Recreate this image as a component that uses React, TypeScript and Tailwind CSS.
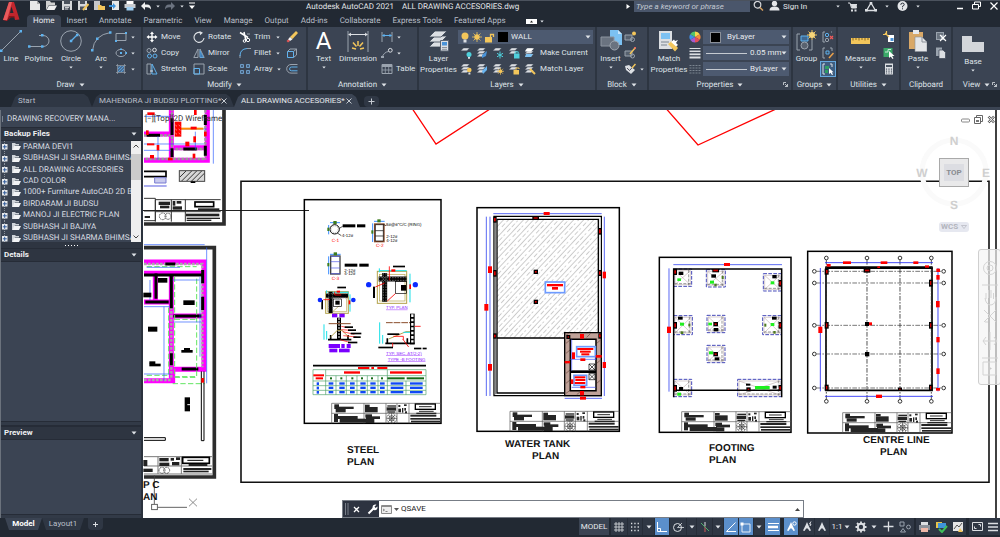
import React from "react";

type Kids = { children?: React.ReactNode };

function Svg({ w, h, children }: Kids & { w: number; h: number }) {
  return (
    <svg width={w} height={h} viewBox={`0 0 ${w} ${h}`} fill="none" className="shrink-0" aria-hidden="true">
      {children}
    </svg>
  );
}

function Caret({ big }: { big?: boolean }) {
  return big ? (
    <Svg w={6} h={4}><path d="M.5 .5h5L3 3.5z" fill="#dfe3e8" /></Svg>
  ) : (
    <Svg w={4} h={3}><path d="M.3 .5h3.4L2 2.5z" fill="#dfe3e8" /></Svg>
  );
}

const W = "#dcdfe3";
const G = "#9aa3ae";
const B = "#5fb2ee";
const Y = "#f3c65b";

/* ---------- small 12x12 icons ---------- */
const icons: Record<string, React.ReactNode> = {
  rect: <><path d="M1 2.5h10v7H1z" stroke={G} /><path d="M0 9h2v2H0zM10 1h2v2h-2z" fill={B} /></>,
  ellipse: <><ellipse cx="6" cy="6" rx="5" ry="3.6" stroke={G} /><path d="M5 5h2v2H5zM10.300 5h1.700v2h-1.700zM5 1.500h2v1.500H5z" fill={B} /></>,
  hatch: <><path d="M2.500 1v10M9.500 1v10M1 2.500h10M1 9.500h10" stroke={G} strokeWidth=".7" /><path d="M3 3h6v6H3z" fill="#4b6d94" /><path d="M3 6l3-3M3 9l6-6M6 9l3-3" stroke={B} strokeWidth=".7" /></>,
  move: <path d="M6 .5L8 3H6.700v2.300H9V4l2.500 2L9 8V6.700H6.700V9H8l-2 2.500L4 9h1.300V6.700H3V8L.5 6 3 4v1.300h2.300V3H4z" fill="#fff" />,
  copy: <><circle cx="3" cy="3.500" r="2" stroke={G} /><circle cx="8.500" cy="3" r="1.800" stroke={W} /><circle cx="3.500" cy="9" r="2" stroke={B} /><circle cx="9" cy="9" r="2" stroke={B} /></>,
  stretch: <><path d="M1 1h4v10H1z" stroke={G} /><path d="M6 1l5 10H6z" stroke={B} /><path d="M4 8h3" stroke={W} /></>,
  rotate: <><path d="M8.500 2A5 5 0 1 0 11 7" stroke={W} strokeWidth="1.100" /><path d="M6.500 0l3.500 1.800-3 2.500z" fill={W} /></>,
  mirror: <><path d="M5 2v8.500H.8zM7 2v8.500h4.200z" stroke={G} /><path d="M7 3.500v7h3.500z" fill="#3f78b0" stroke={B} strokeWidth=".6" /></>,
  scale: <><path d="M1 1h10v10H1z" stroke={G} /><path d="M1 5.500h5.500V11H1z" stroke={B} /></>,
  trim: <><path d="M1 1.500l8 5M5 1l2 9" stroke="#fff" strokeWidth="1.500" /><path d="M8 3h3" stroke={G} /><circle cx="9" cy="9" r="1.700" stroke="#fff" /><circle cx="5.500" cy="10" r="1.300" stroke="#fff" /></>,
  fillet: <><path d="M1 11V8" stroke={G} /><path d="M1 9Q1 2 8 1.500" stroke={B} /><path d="M8 1.500h4" stroke={G} /></>,
  array: <path d="M1.500 1.500h3v3h-3zM7.500 1.500h3v3h-3zM1.500 7.500h3v3h-3zM7.500 7.500h3v3h-3z" fill="#44607e" stroke="#6d9bc5" />,
  erase: <><path d="M10 0l2 2-5.500 6L4 6z" fill={Y} /><path d="M4 6l2.500 2.200L4 10 2 8.500z" fill="#f5f5f5" /><path d="M2 8.500L4 10l-2 1.500L.5 10z" fill="#e05555" /></>,
  explode: <><path d="M1.500 4.500h6v6h-6z" stroke={B} /><path d="M1.500 4.500L4 2h6.500l-3 2.500M10.500 2v6l-3 2.500" stroke={G} /></>,
  offset: <><path d="M11.500 1.500H5a4.300 4.300 0 0 0 0 8.600h6.500" stroke={G} /><path d="M11.500 4H5.500a1.900 1.900 0 0 0 0 3.800h6" stroke={B} /></>,
  dim: <><path d="M1 1v10M11 1v10" stroke={G} /><path d="M1.500 4.500h9M3.500 3L2 4.500 3.500 6M8.500 3L10 4.500 8.500 6" stroke={B} /></>,
  leader: <><path d="M1 10.500Q3 5 7.500 4.500" stroke={G} /><circle cx="9.300" cy="3.300" r="1.900" stroke={W} /><path d="M0 9h3v2H0z" fill={G} /></>,
  table: <><path d="M1 1.500h10v9H1z" stroke={G} /><path d="M1 2h10v2H1z" fill={G} /><path d="M4.300 4v6.500M7.700 4v6.500M1 7h10" stroke={G} strokeWidth=".8" /></>,
  insert1: <><path d="M1 4h7v5H1z" stroke={G} fill="#56606e" /><circle cx="8.500" cy="8.500" r="2" stroke={G} /><circle cx="10" cy="2.500" r="2" fill={Y} /></>,
  insert2: <><path d="M1 4h7v5H1z" stroke={G} fill="#56606e" /><circle cx="8.500" cy="9" r="2" stroke={G} /><path d="M11.500 .5L6 7" stroke={Y} strokeWidth="1.500" /><path d="M11.700 .3L10.500 1.700" stroke="#e66" strokeWidth="1.800" /></>,
  tag: <><path d="M1 3l4-1 6 5-4 4-5-4z" fill={W} /><path d="M3 5l2.500 2.500L11 1.500" stroke="#445" strokeWidth=".9" /><path d="M11.500 1L8 5" stroke={Y} strokeWidth="1.500" /></>,
  wheel: <><path d="M6 6V.500A5.500 5.500 0 0 1 10.800 3.200z" fill="#f6d94c" /><path d="M6 6l4.800-2.800a5.500 5.500 0 0 1 0 5.500z" fill="#f58a3c" /><path d="M6 6l4.800 2.700A5.500 5.500 0 0 1 6 11.500z" fill="#e34d5c" /><path d="M6 6v5.500a5.500 5.500 0 0 1-4.800-2.800z" fill="#a45cd0" /><path d="M6 6L1.200 8.700a5.500 5.500 0 0 1 0-5.500z" fill="#3f8fe8" /><path d="M6 6L1.200 3.200A5.500 5.500 0 0 1 6 .5z" fill="#52c46a" /></>,
  weights: <><path d="M.5 1.500h11" stroke={W} /><path d="M.5 4.300h11" stroke={W} strokeWidth="1.500" /><path d="M.5 7.300h11" stroke={W} strokeWidth="1.800" /><path d="M.5 10.500h11" stroke={W} strokeWidth="2" /></>,
  types: <path d="M.5 2.500h11M.5 5h11M.5 7.500h11M.5 10h11" stroke="#7b8490" strokeDasharray="2 1" />,
  ungroup: <><path d="M3 1H1v10h2M9 1h1" stroke={G} /><circle cx="5" cy="4" r="1.700" stroke={B} /><circle cx="5" cy="9" r="1.700" stroke={G} /><path d="M8 5l3 3M11 5L8 8" stroke="#ef5a5a" strokeWidth="1.200" /></>,
  groupEdit: <><path d="M3 1H1v10h2M8 1h2v3" stroke={G} /><path d="M4 4h3v3H4z" stroke={B} /><path d="M11.500 6L7 11" stroke="#eda24a" strokeWidth="1.500" /></>,
  groupSel: <><path d="M3 1H1v10h2M8 1h2v3" stroke={W} /><path d="M3 3h4v3H3zM3 7h3v3H3z" fill="#2f9d63" /><path d="M7 5v6l1.500-1.200L10 12l1-.6-1.200-2.200H11.500z" fill="#fff" /></>,
  quick: <><path d="M5 4h6v7H5z" fill="#fff" /><path d="M7.500 7h3v3h-3z" fill="#4a93d8" /><path d="M2 2l4 4M3.500 0v3M0 3.500h3" stroke={Y} strokeWidth="1.200" /></>,
  select: <><path d="M.5 1h9v9h-9z" fill="#3ba968" /><path d="M2 5h3V2.500h3" stroke="#cbead7" /><path d="M6 4v7l1.700-1.500L9.500 12l1-.7L9 9h2.500z" fill="#fff" /></>,
  calc: <><path d="M2 .5h8v11H2z" fill={W} /><path d="M3 2h6v2H3z" fill="#4b5563" /><path d="M3.500 5.500v5M6 5.500v5M8.500 5.500v5" stroke="#4b5563" strokeDasharray="1.200 .8" strokeWidth="1.200" /></>,
  cut: <><path d="M1 1h8v8H1z" fill={G} /><path d="M2 3h6M2 5h4M2 7h4" stroke="#3b4453" /><path d="M5 4l6 6M11 4l-6 6" stroke="#fff" strokeWidth="1.100" /></>,
  clip: <><path d="M1 .5h6V9H1z" fill={G} /><path d="M4 3h4l2.500 2.500v6H4z" fill={W} stroke="#3b4453" strokeWidth=".7" /></>,
};

function Icon({ n }: { n: string }) {
  return <Svg w={12} h={12}>{icons[n]}</Svg>;
}

function Sheets({ badge, n = 3 }: { badge?: React.ReactNode; n?: number }) {
  return (
    <Svg w={12} h={12}>
      {Array.from({ length: n }, (_, i) => (
        <path key={i} d={`M3.500 ${1 + i * 3}h6l-2.500 2.800H.8z`} fill={W} stroke="#3b4453" strokeWidth=".4" />
      ))}
      {badge}
    </Svg>
  );
}

const cy = "#4fd0dc";
const layerRow1 = [
  <Sheets n={1} badge={<><circle cx="9" cy="7.500" r="2.500" fill={cy} /><path d="M8 10h2v1.800H8z" fill={W} /></>} />,
  <Sheets badge={<path d="M6 8l5-4-1 5-4 2z" fill="#4a93d8" />} />,
  <Sheets n={1} badge={<path d="M8 4.500v7M5 6.300l6 3.500M11 6.300L5 9.800" stroke={cy} />} />,
  <Sheets n={2} badge={<><path d="M6 6.500h5.500v5H6z" fill={cy} /><path d="M7.200 6.500V4.800h3v1.700" stroke={cy} /></>} />,
  <Sheets badge={<><path d="M3 1.500h7l-3 3H1z" fill="#fff" /><path d="M2 7h7l-2 3H1z" fill="#7cc1f2" /></>} />,
];
const layerRow2 = [
  <Sheets badge={<><circle cx="9.300" cy="7" r="2.300" fill={Y} /><path d="M8.400 9.500h2v2h-2z" fill={W} /></>} />,
  <Sheets badge={<path d="M6 8l5-5v4l-4 4z" fill="#68b4f0" />} />,
  <Sheets badge={<><circle cx="8.500" cy="8.300" r="1.800" fill={Y} /><path d="M8.500 4.800v7M5 8.300h7M6 5.800l5 5M11 5.800l-5 5" stroke={Y} strokeWidth=".7" /></>} />,
  <Sheets n={2} badge={<><path d="M5.500 7h5.500v4.500H5.500z" fill={Y} /><path d="M8 7V5h3v1" stroke={Y} /></>} />,
  <Sheets badge={<path d="M6 6l5 5" stroke={Y} strokeWidth="2" />} />,
];

/* ---------- ribbon parts ---------- */
function Panel({ title, children, caret = true, corner }: Kids & { title: string; caret?: boolean; corner?: boolean }) {
  return (
    <section aria-label={title} className="flex min-w-0 flex-col border-r-2 border-[#2d3541] bg-[#3b4453] last:border-r-0">
      <div className="flex h-[52px] pt-[2px]">{children}</div>
      <div className="relative flex h-[11px] items-center justify-center gap-1">
        <span>{title}</span>
        {caret && <Caret big />}
        {corner && (
          <span className="absolute right-[3px]"><Svg w={5} h={5}><path d="M.5 3V.5H3M2 2l2.500 2.500M4.500 2v2.500H2" stroke={W} strokeWidth=".8" /></Svg></span>
        )}
      </div>
    </section>
  );
}

function Big({ icon, lines, caret, width }: { icon: React.ReactNode; lines: string[]; caret?: boolean; width: string }) {
  return (
    <button className={`flex shrink-0 flex-col items-center ${width}`}>
      <span className="flex h-[24px] items-center justify-center">{icon}</span>
      {lines.map((l) => <span key={l} className="h-[11px] leading-[11px]">{l}</span>)}
      {caret && <span className="flex h-[6px] items-center"><Caret /></span>}
    </button>
  );
}

function Row({ n, label, caret }: { n: string; label?: string; caret?: boolean }) {
  return (
    <button aria-label={label ?? n} className="flex h-4 items-center">
      <Icon n={n} />
      {label && <span className="pl-[3px]">{label}</span>}
      {caret && <span className="ml-auto pl-1 pr-[6px]"><Caret /></span>}
    </button>
  );
}

function Combo({ label, value, children, line }: Kids & { label: string; value: string; line?: boolean }) {
  return (
    <div className="relative flex h-[14px] min-w-0 items-center gap-[3px] bg-[#4d5a70] pl-[3px]">
      {children}
      {line && <span className="h-px w-[41px] shrink-0 bg-[#c5cad1]" />}
      <select aria-label={label} defaultValue={value} className="min-w-0 flex-1 appearance-none bg-transparent text-[8px] leading-[12px] text-[#e6e9ed] outline-none">
        <option>{value}</option>
      </select>
      <span className="pointer-events-none absolute right-[2px]"><Caret big /></span>
    </div>
  );
}

function Ribbon() {
  return (
    <div className="grid grid-cols-[143fr_165fr_111fr_178fr_52fr_144fr_45fr_63fr_52fr_47fr]">
      <Panel title="Draw">
        <Big width="w-[22px]" lines={["Line"]} icon={<Svg w={22} h={22}><path d="M1.500 20.500l19-19" stroke={G} /><path d="M0 19.500h2.500V22H0zM19.500 0H22v2.500h-2.500z" fill={B} /></Svg>} />
        <Big width="w-[33px]" lines={["Polyline"]} icon={<Svg w={22} h={16}><path d="M1 13.500h14a6 5.500 0 0 0 0-11h-4" stroke={G} /><path d="M0 12.300h2.500v2.500H0zM13 12.300h2.500v2.500H13zM13 1h2.500v2.500H13z" fill={B} /></Svg>} />
        <Big width="w-[32px]" caret lines={["Circle"]} icon={<Svg w={22} h={22}><circle cx="11" cy="11" r="10.300" stroke={G} /><path d="M11 11l6-6" stroke={B} strokeWidth="1.200" /><path d="M9.800 9.800h2.500v2.500H9.800zM16 3.800h2.500v2.500H16z" fill={B} /></Svg>} />
        <Big width="w-[28px]" caret lines={["Arc"]} icon={<Svg w={21} h={21}><path d="M1.500 19.500Q3 4 19.500 1.500" stroke={G} /><path d="M0 18h2.500v2.500H0zM18 .3h2.500v2.500H18zM5 6.500h2.500V9H5z" fill={B} /></Svg>} />
        <div className="flex w-[26px] flex-col"><Row n="rect" caret /><Row n="ellipse" caret /><Row n="hatch" caret /></div>
      </Panel>
      <Panel title="Modify">
        <div className="grid w-full grid-cols-[47px_46px_47px_14px] content-start pl-[3px]">
          <Row n="move" label="Move" /><Row n="rotate" label="Rotate" /><Row n="trim" label="Trim" caret /><Row n="erase" />
          <Row n="copy" label="Copy" /><Row n="mirror" label="Mirror" /><Row n="fillet" label="Fillet" caret /><Row n="explode" />
          <Row n="stretch" label="Stretch" /><Row n="scale" label="Scale" /><Row n="array" label="Array" caret /><Row n="offset" />
        </div>
      </Panel>
      <Panel title="Annotation">
        <Big width="w-[31px]" caret lines={["Text"]} icon={<span className="text-[24px] leading-[24px] text-white">A</span>} />
        <Big width="w-[38px]" lines={["Dimension"]} icon={<Svg w={22} h={21}><path d="M1 0v21M21 0v21" stroke={G} /><path d="M1.500 3.500h19M4 2L2 3.500 4 5M18 2l2 1.500L18 5" stroke={W} /><path d="M5 17l4 1M6 11.500l3.500 4M11 10v5M16 11.500l-3.500 4M17 17l-4 1" stroke={Y} strokeWidth="1.500" /></Svg>} />
        <div className="flex w-[38px] flex-col pl-[4px]">
          <div className="flex w-[24px] flex-col"><Row n="dim" caret /><Row n="leader" caret /></div>
          <Row n="table" label="Table" />
        </div>
      </Panel>
      <Panel title="Layers">
        <Big width="w-[39px]" lines={["Layer", "Properties"]} icon={<Svg w={22} h={22}>{[10, 5, 0].map((y) => <path key={y} d={`M7 ${1 + y}h12l-6 6H1z`} fill={W} stroke="#3b4453" strokeWidth=".8" />)}<path d="M12.500 10.500h8V21h-8z" fill={W} stroke="#5b6573" /><path d="M14 12h5v3.500h-5z" fill="#4a93d8" /><path d="M14 17.500h5M14 19.300h5" stroke="#8a929c" /></Svg>} />
        <div className="flex min-w-0 flex-1 flex-col pr-[2px]">
          <div className="h-4 pt-px">
            <Combo label="Layer" value="WALL">
              <Svg w={8} h={11}><circle cx="4" cy="4" r="3.500" fill={Y} /><path d="M2.500 7.500h3v3h-3z" fill={W} /></Svg>
              <Svg w={10} h={10}><circle cx="5" cy="5" r="2.700" fill={Y} /><path d="M5 0v10M0 5h10M1.500 1.500l7 7M8.500 1.500l-7 7" stroke={Y} strokeWidth=".8" /></Svg>
              <Svg w={10} h={11}><path d="M0 5h7v5.500H0z" fill={Y} /><path d="M5.500 5V2.500h3V5" stroke={Y} strokeWidth="1.300" /></Svg>
              <span className="h-[10px] w-[10px] shrink-0 bg-black" />
            </Combo>
          </div>
          <div className="flex h-4 items-center gap-1 pl-[2px]">{layerRow1.map((s, i) => <span key={i}>{s}</span>)}<button className="whitespace-nowrap">Make Current</button></div>
          <div className="flex h-4 items-center gap-1 pl-[2px]">{layerRow2.map((s, i) => <span key={i}>{s}</span>)}<button className="whitespace-nowrap">Match Layer</button></div>
        </div>
      </Panel>
      <Panel title="Block">
        <Big width="w-[27px]" caret lines={["Insert"]} icon={<Svg w={22} h={22}><path d="M10 0h8l4 4v11H10z" fill="#7cc1f2" /><path d="M18 0v4h4" fill="#c9e6fb" /><path d="M1 7h13v9H1z" fill="#6a7380" stroke="#8d95a0" /><circle cx="14.500" cy="15.500" r="4.500" fill="#6a7380" stroke="#a0a7b0" /></Svg>} />
        <div className="flex w-[23px] flex-col"><Row n="insert1" /><Row n="insert2" /><Row n="tag" caret /></div>
      </Panel>
      <Panel title="Properties" corner>
        <Big width="w-[40px]" lines={["Match", "Properties"]} icon={<Svg w={22} h={22}><path d="M1 1h13v18H1z" fill={W} /><path d="M3 3h9v6H3z" fill="#7cc1f2" /><path d="M3 12h8M3 15h6" stroke="#7b848f" /><path d="M10 14l4-3 6 7-3 3.500z" fill={Y} /><path d="M13 12l3-2.500 1 1.500 3-1-2 3 2 2-2 1.500z" fill="#fff" /></Svg>} />
        <div className="flex w-[14px] flex-col"><Row n="wheel" /><Row n="weights" /><Row n="types" /></div>
        <div className="flex min-w-0 flex-1 flex-col gap-[2px] pr-[2px] pt-px">
          <Combo label="Object color" value="ByLayer"><span className="ml-1 mr-[3px] h-[11px] w-[11px] shrink-0 border border-[#8a8f98] bg-black" /></Combo>
          <Combo label="Lineweight" value="0.05 mm" line />
          <Combo label="Linetype" value="ByLayer" line />
        </div>
      </Panel>
      <Panel title="Groups">
        <Big width="w-[27px]" lines={["Group"]} icon={<Svg w={22} h={22}><path d="M4 4H1v16h3M13 20h3V10" stroke={G} /><path d="M5 6h7v5H5z" fill="#3f6892" stroke={B} /><circle cx="8.500" cy="15.500" r="3.500" fill="#59626f" stroke={G} /><path d="M16 0v10M11 5h10M12.500 1.500l7 7M19.500 1.500l-7 7" stroke={Y} /><circle cx="16" cy="5" r="3" fill="#f8d679" /></Svg>} />
        <div className="flex w-[16px] flex-col items-center"><Row n="ungroup" /><Row n="groupEdit" /><span className="flex h-4 w-4 items-center justify-center border border-[#66a9df] bg-[#3f5e80]"><Row n="groupSel" /></span></div>
      </Panel>
      <Panel title="Utilities">
        <Big width="w-[45px]" caret lines={["Measure"]} icon={<Svg w={19} h={6}><path d="M0 0h19v6H0z" fill={Y} /><path d="M2 0v2.500M5 0v2M8 0v2.500M11 0v2M14 0v2.500M17 0v2" stroke="#8b6a20" /></Svg>} />
        <div className="flex flex-col"><Row n="quick" /><Row n="select" /><Row n="calc" /></div>
      </Panel>
      <Panel title="Clipboard" caret={false}>
        <Big width="w-[34px]" caret lines={["Paste"]} icon={<Svg w={18} h={22}><path d="M0 2h14v17H0z" fill="#d9a867" /><path d="M4 0h6v4H4z" fill="#e8eaed" /><path d="M6 7h7l5 5v9.500H6z" fill="#e4e6e9" stroke="#8a9099" strokeWidth=".6" /><path d="M13 7v5h5" stroke="#8a9099" /></Svg>} />
        <div className="flex flex-col"><Row n="cut" /><Row n="clip" /></div>
      </Panel>
      <Panel title="View" corner>
        <div className="w-full pt-[3px]">
          <Big width="w-[40px]" caret lines={["Base"]} icon={<Svg w={22} h={16}><path d="M0 0h10v6h12v10H0z" fill="#d3d6da" /></Svg>} />
        </div>
      </Panel>
    </div>
  );
}

/* ---------- title bar ---------- */
function TitleBar() {
  return (
    <div className="flex h-[14px] items-start whitespace-nowrap">
      <div className="flex w-[279px] shrink-0 items-center gap-[4px] pl-[2px]">
        <Svg w={12} h={10}><path d="M1 0h7l3 3v6H1z" fill="#e8e8e8" /><path d="M8 0v3h3" fill="#aaa" /></Svg>
        <Svg w={12} h={10}><path d="M1 0h4l1 1.500h4V4H4L1 9z" fill="#d0d0d0" /><path d="M4 4.500h8L9.500 9H1.500z" fill="#f0f0f0" /></Svg>
        <Svg w={12} h={10}><path d="M1 0h10v9H1z" fill="#d5d7da" /><path d="M3 0h6v3H3zM3 5.500h6V9H3z" fill="#4a515c" /><path d="M4 6.500h4M4 8h3" stroke="#fff" strokeWidth=".7" /></Svg>
        <Svg w={12} h={10}><path d="M1 0h9v9H1z" fill="#d5d7da" /><path d="M3 0h5v3H3zM3 5.500h5V9H3z" fill="#4a515c" /><path d="M11.500 3L6 9" stroke={Y} strokeWidth="2" /></Svg>
        <Svg w={12} h={10}><path d="M1 0h6v9H1z" fill="#c8c8c8" /><path d="M5 4h3l1 1h3v4H5z" fill={Y} /></Svg>
        <Svg w={11} h={10}><path d="M3 0h7v9H3z" fill="#e8e8e8" /><path d="M0 4h4V2l3 3-3 3V6H0z" fill="#3f93db" /></Svg>
        <Svg w={12} h={10}><path d="M2.500 0h7v3h-7z" fill="#fff" /><path d="M.5 3h11v4H.5z" fill="#c9ccd1" /><path d="M2.500 6h7v3.500h-7z" fill="#9fd0f5" /></Svg>
        <Svg w={12} h={10}><path d="M1 5l4-4v2.500h2Q11 3.500 11 8.500 9.500 6.200 7 6.200H5V9z" fill="#f0f0f0" /></Svg>
        <Caret />
        <Svg w={12} h={10}><path d="M11 5L7 1v2.500H5Q1 3.500 1 8.500 2.500 6.200 5 6.200h2V9z" fill="#6b7380" /></Svg>
        <Caret />
        <Svg w={8} h={8}><path d="M1 1h6" stroke="#fff" /><path d="M1 3.500h6L4 7z" fill="#fff" /></Svg>
      </div>
      <h1 className="flex w-[320px] shrink-0 gap-2 leading-[11px] text-[#e2e5e9]"><span>Autodesk AutoCAD 2021</span><span>ALL DRAWING ACCESORIES.dwg</span></h1>
      <span className="w-[8px] pt-[3px]"><Svg w={4} h={5}><path d="M.5 0L4 2.500.5 5z" fill="#fff" /></Svg></span>
      <input aria-label="Search" placeholder="Type a keyword or phrase" className="h-[11px] w-[116px] bg-[#4a566b] pl-[2px] text-[8px] italic leading-[11px] text-white outline-none placeholder:text-[#c3c9d2]" />
      <span className="flex w-[33px] gap-[5px] pl-[3px]">
        <Svg w={11} h={10}><circle cx="4.500" cy="3.800" r="3.300" stroke="#d5d7da" strokeWidth="1.200" /><path d="M7 6.500l3 3" stroke="#d5a060" strokeWidth="1.500" /></Svg>
        <Svg w={11} h={10}><circle cx="5.500" cy="2.500" r="2.700" fill="#e4e6e9" /><path d="M.5 9.500q0-4 5-4t5 4z" fill="#e4e6e9" /></Svg>
      </span>
      <button className="w-[53px] text-left leading-[11px] text-[#e2e5e9]">Sign In</button>
      <div className="flex items-center gap-[8px]">
        <Caret />
        <Svg w={9} h={10}><path d="M0 1h2l1.500 5h5L9 2.500H2.500" stroke={W} /><path d="M3 3h5.500L8 6H3.500zM3 7.500h2v2H3zM6.500 7.500h2v2h-2z" fill={W} /></Svg>
        <Svg w={12} h={10}><path d="M6 1l4.500 7.500h-9z" stroke={W} strokeWidth="1.300" /><path d="M4.700 0h2.600v2.500H4.700zM0 7h2.600v2.500H0zM9.400 7H12v2.500H9.400z" fill={W} /></Svg>
        <Caret />
        <Svg w={11} h={11}><circle cx="5.500" cy="5" r="5" fill="#e4e6e9" /><path d="M3.800 3.800q0-1.700 1.700-1.700t1.700 1.500q0 1-1.700 1.700v1M5.500 7.300v1" stroke="#222933" /></Svg>
        <Caret />
      </div>
      <div className="ml-auto flex gap-[9px] pr-[2px]">
        <Svg w={6} h={10}><path d="M0 7.500h6" stroke="#fff" strokeWidth="1.500" /></Svg>
        <Svg w={9} h={10}><path d="M2.500 3V1h6v4.500h-2M.5 3.500h6V8h-6z" stroke="#fff" /></Svg>
        <Svg w={8} h={10}><path d="M.5 1.500l7 7M7.500 1.500l-7 7" stroke="#fff" strokeWidth="1.200" /></Svg>
      </div>
    </div>
  );
}

const menu = ["Insert", "Annotate", "Parametric", "View", "Manage", "Output", "Add-ins", "Collaborate", "Express Tools", "Featured Apps"];

function Header() {
  return (
    <header className="flex">
      <button aria-label="Application menu" className="flex w-[27px] shrink-0 items-start pl-[3px]">
        <Svg w={17} h={22}><path d="M6 1h5l5.500 17.500-4.500.5-1-4H6.500L4 20l-4-1z" fill="#c2262d" /><path d="M6 1h3L4 19l-4 0z" fill="#e85a5c" /><path d="M8.500 5.500l2 6.500H7z" fill="#222933" /><path d="M4 20l2.500-5H11l1 1.500H8z" fill="#8d1419" /></Svg>
      </button>
      <div className="min-w-0 flex-1">
        <TitleBar />
        <nav className="flex h-[12px] items-stretch text-[#b9bfc8]">
          <a href="#home" className="flex items-center rounded-t-sm bg-[#3b4453] px-[6px] text-[#e6e9ed]">Home</a>
          {menu.map((m) => <a key={m} href={`#${m}`} className="flex items-center whitespace-nowrap px-[6px]">{m}</a>)}
          <span className="flex items-center gap-[3px] pl-[14px]"><Svg w={11} h={5}><path d="M0 0h11v5H0z" fill="#fff" /><path d="M4 3.500h3L5.500 1.500z" fill="#222" /></Svg><Caret /></span>
        </nav>
      </div>
    </header>
  );
}

function FileTabs() {
  const tab = "flex h-[13px] items-center justify-between pl-[7px] pr-[8px] whitespace-nowrap [clip-path:polygon(0_100%,4px_3px,8px_0,calc(100%-8px)_0,calc(100%-4px)_3px,100%_100%)]";
  const x = <Svg w={6} h={6}><path d="M.5 .5l5 5M5.500 .5l-5 5" stroke="#c5cad1" /></Svg>;
  return (
    <div className="flex h-[20px] items-end border-b-[3px] border-[#3b4453] pl-[11px]">
      <button className={`${tab} w-[81px] bg-[#2f3744] text-[#b9bfc8]`}>Start</button>
      <button className={`${tab} w-[142px] bg-[#2f3744] text-[#b9bfc8]`}>MAHENDRA JI BUDSU PLOTTING*{x}</button>
      <button className={`${tab} w-[126px] bg-[#3b4453] text-[#e6e9ed]`}>ALL DRAWING ACCESORIES*{x}</button>
      <button aria-label="New drawing" className="ml-1 flex h-[11px] w-[15px] items-center justify-center rounded bg-[#2f3744]"><Svg w={7} h={7}><path d="M3.500 .5v6M.5 3.500h6" stroke="#c5cad1" /></Svg></button>
    </div>
  );
}

/* ---------- drawing recovery palette ---------- */
const backups = ["PARMA DEVI1", "SUBHASH JI SHARMA BHIMSA", "ALL DRAWING ACCESORIES", "CAD COLOR", "1000+ Furniture AutoCAD 2D B", "BIRDARAM JI BUDSU", "MANOJ JI ELECTRIC PLAN", "SUBHASH JI BAJIYA", "SUBHASH JI SHARMA BHIMSA"];

function PaletteHead({ children }: Kids) {
  return (
    <button className="flex h-[14px] w-full shrink-0 items-center justify-between border-y border-[#262c37] bg-[#2e3541] pl-[3px] pr-1 font-bold text-[#eef0f3]">
      {children}<Caret big />
    </button>
  );
}

function Palette() {
  return (
    <aside className="flex w-[143px] shrink-0 flex-col border-l border-r-2 border-l-[#6b727c] border-r-[#2b323d] bg-[#3b4453] text-[#d7dbe0]">
      <h2 className="flex h-[17px] shrink-0 items-center gap-[4px] pl-px"><span className="h-[6px] w-px bg-[#7b8490]" />DRAWING RECOVERY MANA...</h2>
      <PaletteHead>Backup Files</PaletteHead>
      <div className="flex h-[101px] shrink-0 overflow-hidden">
        <ul className="grid h-[103px] min-w-0 flex-1 grid-rows-9 overflow-hidden">
          {backups.map((b, i) => (
            <li key={i} className="flex items-center whitespace-nowrap">
              <Svg w={20} h={11}><path d="M3.500 0v11" stroke="#8b929c" strokeDasharray="1 1" /><path d="M1 3h5.500v5.500H1z" fill="#e9ebee" /><path d="M3.700 3.800v4M1.800 5.800h4" stroke="#2f5a9a" /><path d="M11 2h3l1 1h3v1.500h-4L12 9h-1z" fill="#cfd3d8" /><path d="M13 5h7l-2 4h-6.500z" fill="#f2f3f5" /></Svg>
              <span className="pl-[2px]">{b}</span>
            </li>
          ))}
        </ul>
        <div className="flex w-[10px] shrink-0 flex-col items-center justify-between bg-[#efefef] py-[3px]">
          <Svg w={6} h={4}><path d="M.5 3.500L3 1l2.500 2.500" stroke="#444" /></Svg>
          <span className="mb-auto mt-[6px] h-[26px] w-[10px] bg-[#cbcbcb]" />
          <Svg w={6} h={4}><path d="M.5 .5L3 3 5.500 .5" stroke="#444" /></Svg>
        </div>
      </div>
      <div className="flex h-[6px] shrink-0 items-center justify-center gap-[2px] bg-[#2e3541]">{[0, 1, 2, 3, 4].map((i) => <span key={i} className="h-px w-px bg-white" />)}</div>
      <PaletteHead>Details</PaletteHead>
      <div className="flex-[159_1_0px]" />
      <div className="h-[5px] border-y border-[#262c37] bg-[#323a47]" />
      <PaletteHead>Preview</PaletteHead>
      <div className="flex-[74_1_0px]" />
      <div className="h-[4px] border-t border-[#262c37] bg-[#323a47]" />
    </aside>
  );
}

/* ---------- drawing sheets ---------- */
const K = "#000";
const R = "#f00";
const L = "#3a4cf0";

/* Filled boxes given as [x, y, w, h] */
function Boxes({ at, fill }: { at: number[][]; fill: string }) {
  return <>{at.map(([x, y, w, h], i) => <rect key={i} x={x} y={y} width={w} height={h} fill={fill} />)}</>;
}

function TitleBlock({ x, y }: { x: number; y: number }) {
  return (
    <g transform={`translate(${x} ${y})`}>
      <path d="M0 60V0H328M0 30H328M97 0V60M163 0V60M196 0V60M232 0V60" stroke="#555" strokeWidth="2" />
      <Boxes fill="#252525" at={[[8, 3, 14, 8], [8, 10, 58, 7], [12, 17, 30, 10], [7, 32, 12, 24], [18, 38, 60, 9], [24, 46, 82, 12], [100, 4, 14, 7], [100, 11, 38, 16], [101, 33, 20, 10], [103, 39, 42, 8], [102, 47, 26, 12], [167, 6, 26, 4], [165, 12, 28, 10], [167, 24, 24, 4], [200, 5, 6, 6], [217, 3, 8, 5], [200, 16, 8, 11], [211, 14, 4, 14], [218, 14, 5, 8], [220, 24, 6, 6], [254, 28, 60, 4], [236, 34, 78, 6], [236, 44, 90, 5], [238, 52, 88, 5]]} />
      <rect x="251" y="2" width="60" height="16" stroke={K} strokeWidth="4" />
      <path d="M262 10h38M262 24h44" stroke={K} strokeWidth="2.500" />
      <g stroke="#333" strokeWidth="2" fill="none"><circle cx="180" cy="45" r="15" strokeDasharray="4 2" /><circle cx="180" cy="45" r="8" /><path d="M180 31v28M166 45h28M170 35l20 20M190 35l-20 20" /></g>
    </g>
  );
}

function SteelSheet() {
  return (
    <g transform="translate(300 195) scale(.33333)" strokeWidth="2">
      <rect x="13" y="14" width="410" height="671" stroke={K} strokeWidth="4.500" />
      <circle cx="104" cy="103" r="14" stroke={K} strokeWidth="3" />
      <circle cx="104" cy="103" r="10" stroke="#999" strokeDasharray="3 3" />
      <rect x="224" y="87" width="28" height="53" stroke="#8a4b2a" strokeWidth="4" />
      <path d="M226 89h24v49h-24zM226 107h24M226 123h24" stroke={K} />
      <rect x="92" y="183" width="28" height="54" stroke="#444" strokeWidth="4" />
      <path d="M92 200h28M92 219h28M92 184h28M92 236h28" stroke="#4b55e8" />
      <path d="M90 83h30M86 90v28M222 79h32M218 85v56M90 178h32M86 184v54" stroke="#3a8cff" strokeWidth="3" />
      <Boxes fill="#3d7d1d" at={[[100, 78, 10, 9], [232, 73, 10, 9], [101, 172, 10, 9], [82, 98, 6, 10], [214, 106, 6, 10], [82, 204, 6, 10]]} />
      <Boxes fill={K} at={[[128, 88, 38, 9], [171, 88, 25, 9], [134, 206, 38, 9], [178, 206, 28, 9], [112, 275, 26, 5], [279, 212, 36, 5], [64, 315, 5, 28], [219, 275, 6, 34]]} />
      <path d="M118 100l10-6M112 114l12 8M250 88l8 4" stroke={K} />
      <g fontFamily="Liberation Sans" fontSize="13" fill={K}>
        <text x="126" y="127">4-12#</text><text x="258" y="92">8#@6"C/C (RING)</text><text x="259" y="130">2-12#</text><text x="259" y="141">4-12#</text><text x="133" y="230">2-12#</text><text x="133" y="241">4-12#</text>
      </g>
      <g fontFamily="Liberation Sans" fontSize="14" fill={R}><text x="95" y="142">C-1</text><text x="228" y="156">C-2</text><text x="95" y="255">C-3</text></g>
      {/* footing plans */}
      <g>
        <rect x="77" y="290" width="68" height="65" stroke="#b3a24a" strokeWidth="3" />
        <path d="M82 296h58v54H82zM98 350l20-18" stroke="#b3a24a" />
        <path d="M84 292h60M150 298v52M144 290v14M80 286v10" stroke="#18e0e8" strokeWidth="3" />
        <path d="M92 290v64M78 302h66" stroke={K} strokeWidth="12" />
        <path d="M86 290v64M98 290v64M78 296h66M78 309h66" stroke="#777" strokeDasharray="4 3" />
        <rect x="101" y="312" width="24" height="22" stroke={K} /><rect x="106" y="317" width="13" height="12" fill={K} />
        <path d="M70 314h20M104 290v10h20" stroke={R} strokeWidth="2.500" />
        <circle cx="60" cy="315" r="7" fill="#0b2bff" /><circle cx="160" cy="315" r="7" fill="#0b2bff" />
        <Boxes fill={R} at={[[146, 316, 5, 12], [110, 287, 10, 6]]} />
      </g>
      <g>
        <rect x="232" y="229" width="88" height="96" stroke="#b3a24a" strokeWidth="3" />
        <rect x="239" y="238" width="76" height="80" stroke="#b3a24a" />
        <path d="M238 227h82M330 236v86M238 220v12" stroke="#18e0e8" strokeWidth="3" />
        <path d="M254 234v86M236 252h84" stroke={K} strokeWidth="15" />
        <path d="M250 234v86M258 234v86M236 248h84M236 256h84" stroke="#999" strokeDasharray="5 3" />
        <rect x="286" y="260" width="34" height="36" stroke={K} /><rect x="303" y="270" width="15" height="17" fill={K} />
        <path d="M268 214v42M226 276l28-12M262 318l24-22" stroke={R} strokeWidth="2.500" />
        <circle cx="206" cy="269" r="8" fill="#0b2bff" /><circle cx="346" cy="269" r="8" fill="#0b2bff" />
        <Boxes fill={R} at={[[328, 268, 5, 14], [274, 223, 12, 7]]} />
      </g>
      <g fontFamily="Liberation Sans" fontSize="13" fill="#8a12ff" textDecoration="underline">
        <text x="258" y="343">TYP. PLAN</text><text x="258" y="480">TYP. SEC. AT(2-2)</text><text x="263" y="497">TYPE -B FOOTING</text>
      </g>
      <Boxes fill="#7a00ff" at={[[96, 356, 16, 11], [118, 356, 16, 11], [86, 447, 34, 12], [124, 447, 10, 12], [140, 447, 12, 12], [88, 461, 24, 11], [117, 461, 32, 11]]} />
      {/* sections */}
      <path d="M117 368v66" stroke={K} strokeWidth="12" /><path d="M117 370v60" stroke="#fff" strokeWidth="4" strokeDasharray="4 5" />
      <path d="M84 434h70M92 420v14M144 420v14" stroke={K} strokeWidth="5" />
      <path d="M86 386h66" stroke="#8a4b2a" strokeWidth="3" />
      <path d="M92 426l20-20h14l20 20" stroke="#b3a24a" strokeWidth="3" />
      <path d="M72 388v46M80 408v26" stroke="#18e0e8" strokeWidth="3" />
      <path d="M124 394l20 4M124 404l30 2M128 410l35 8M130 422l40 4M120 434l28 8" stroke={R} strokeWidth="2" />
      <Boxes fill={K} at={[[134, 394, 25, 5], [144, 403, 24, 5], [152, 413, 32, 5], [160, 424, 22, 5], [144, 440, 28, 5]]} />
      <path d="M337 356v92" stroke={K} strokeWidth="14" /><path d="M337 358v86" stroke="#fff" strokeWidth="7" strokeDasharray="8 5" />
      <path d="M256 445h88M262 430v14M322 430v14" stroke={K} strokeWidth="5" />
      <path d="M258 383h72" stroke="#8a4b2a" strokeWidth="3" strokeDasharray="20 3" />
      <path d="M266 432l52-22h12" stroke="#b3a24a" strokeWidth="3" />
      <path d="M239 382v64M248 420v26M310 412h20" stroke="#18e0e8" strokeWidth="3" />
      <path d="M344 394h18M280 424h30v10M308 432l18 24M278 444v12" stroke={R} strokeWidth="2.500" />
      <Boxes fill={K} at={[[262, 415, 36, 5], [235, 455, 44, 5], [342, 458, 22, 5], [368, 458, 12, 5]]} />
      {/* schedule */}
      <path d="M39 512h339" stroke={K} strokeWidth="5" />
      <path d="M39 524h339v75H39zM77 524v75M262 524v75M77 542h301M39 558h339M39 572h339M39 586h339M108 542v57M139 542v57M171 542v57M202 542v57M234 542v57M318 558v41" stroke="#4fa068" strokeWidth="2" />
      <Boxes fill={R} at={[[174, 516, 34, 6], [214, 516, 8, 6], [232, 516, 30, 6], [132, 529, 48, 7], [270, 529, 96, 7], [40, 538, 32, 6], [47, 547, 22, 6]]} />
      <Boxes fill="#176b17" at={[[90, 547, 6, 6], [121, 547, 6, 6], [154, 547, 6, 6], [183, 547, 6, 6], [213, 547, 6, 6], [243, 547, 6, 6], [262, 547, 52, 6], [320, 547, 52, 6]]} />
      {[562, 575, 588].map((y) => <Boxes key={y} fill="#1049f5" at={[[50, y, 7, 8], [86, y, 14, 7], [118, y, 16, 7], [150, y, 14, 7], [181, y, 16, 7], [211, y, 16, 7], [240, y, 14, 7], [272, y, 38, 7], [330, y, 38, 7]]} />)}
      <TitleBlock x={95} y={625} />
    </g>
  );
}

function WaterTankSheet() {
  return (
    <g transform="translate(470 200) scale(.33333)" strokeWidth="2">
      <defs>
        <pattern id="tank" width="56" height="22" patternUnits="userSpaceOnUse" patternTransform="rotate(-47)">
          <path d="M0 4h56" stroke="#a5a5a5" strokeWidth="1.800" /><path d="M6 15h14M26 15h14M46 15h6" stroke="#a5a5a5" strokeWidth="1.800" />
        </pattern>
      </defs>
      <rect x="21" y="23" width="427" height="671" stroke={K} strokeWidth="4.500" />
      <rect x="80" y="58" width="305" height="356" fill="url(#tank)" />
      <path d="M72 49h322v538H72z" stroke={K} strokeWidth="4" />
      <path d="M81 58h304v340M81 58v521h202M81 414h202" stroke={K} strokeWidth="4" />
      <path d="M76 53v530" stroke="#888" strokeWidth="5" /><path d="M390 53v345" stroke="#ddd" strokeWidth="4" />
      <path d="M70 41h325M49 50v538M60 50v538M403 50v538M284 595h112" stroke={L} strokeWidth="2.500" />
      <path d="M284 398h110v189H284z" fill="#bfa198" stroke={K} strokeWidth="4" />
      <path d="M288 406l8-6M288 430l12-10M288 460l12-10M288 490l12-10M288 520l12-10M288 550l12-10M288 580l16-12M380 430l12-10M380 490l12-10M380 550l12-10M320 584l12-10M350 412l12-12" stroke="#6d4a40" />
      <path d="M301 418h77v154h-77zM301 516h77" fill="#fff" stroke={K} strokeWidth="4.500" />
      <path d="M301 515h77" stroke={K} strokeWidth="8" />
      <path d="M305 418v94M301 478h77M305 562h72M376 440v40" stroke={L} strokeWidth="2" />
      <path d="M357 492h18v18h-18zM357 492l18 18M375 492l-18 18M357 521h18v18h-18zM357 521l18 18M375 521l-18 18" stroke={K} />
      <g stroke="#6e9bff" strokeWidth="5" fill="#fff"><rect x="226" y="246" width="58" height="32" /><rect x="320" y="440" width="56" height="30" /><rect x="312" y="526" width="38" height="30" /></g>
      <Boxes fill={R} at={[[221, 36, 18, 9], [54, 199, 12, 20], [43, 312, 12, 20], [54, 492, 12, 20], [398, 215, 10, 20], [398, 486, 10, 18], [231, 252, 48, 7], [246, 261, 18, 8], [322, 444, 48, 6], [330, 452, 32, 6], [334, 460, 24, 6], [314, 529, 32, 6], [316, 537, 30, 6], [314, 546, 32, 6], [330, 402, 12, 14], [306, 457, 9, 20], [302, 538, 8, 14], [331, 475, 15, 8], [331, 558, 15, 7], [284, 483, 16, 7], [377, 465, 18, 8], [330, 573, 12, 13], [330, 590, 18, 9]]} />
      <Boxes fill={K} at={[[70, 50, 10, 18], [70, 210, 10, 20], [70, 400, 10, 16], [385, 84, 10, 20], [385, 210, 10, 18], [385, 400, 10, 16], [187, 50, 20, 10], [191, 209, 13, 13], [191, 299, 13, 13], [289, 405, 12, 12]]} />
      <Boxes fill="#d00" at={[[72, 54, 5, 10], [72, 214, 5, 12], [72, 404, 5, 8], [387, 88, 5, 12], [387, 214, 5, 10], [387, 403, 5, 9], [191, 52, 12, 4], [195, 213, 5, 5], [195, 303, 5, 5], [293, 409, 4, 4]]} />
      <TitleBlock x={120} y={634} />
    </g>
  );
}

function Footing({ x, y, w = 54, h = 52 }: { x: number; y: number; w?: number; h?: number }) {
  return (
    <g transform={`translate(${x} ${y})`}>
      <rect width={w} height={h} stroke="#4448b8" strokeWidth="3" strokeDasharray="11 4" />
      <path d={`M4 5h${w - 8}v${h - 10}H4zM4 5L${w - 4} ${h - 5}M${w - 4} 5L4 ${h - 5}`} stroke="#b09a9a" strokeWidth="1.500" />
      <path d={`M${w - 9} 3v${h - 6}M3 ${h - 8}h${w - 6}`} stroke="#666" strokeWidth="2" strokeDasharray="9 4" />
    </g>
  );
}

function FootingSheet() {
  return (
    <g transform="translate(650 245) scale(.33333)" strokeWidth="2">
      <rect x="28" y="37" width="395" height="525" stroke={K} strokeWidth="4.500" />
      <Footing x={71} y={72} /><Footing x={169} y={74} w={57} /><Footing x={340} y={86} /><Footing x={71} y={212} w={56} h={57} /><Footing x={338} y={212} w={56} h={57} /><Footing x={171} y={211} /><Footing x={171} y={301} /><Footing x={71} y={403} /><Footing x={263} y={403} w={131} />
      <path d="M71 457V72H395v385M71 436h324" stroke={K} strokeWidth="4.500" />
      <path d="M70 59h326M57 70v370" stroke={L} strokeWidth="2.500" />
      <Boxes fill={R} at={[[222, 54, 18, 9], [51, 245, 12, 19]]} />
      <Boxes fill={K} at={[[70, 72, 11, 18], [187, 72, 20, 10], [386, 105, 10, 20], [70, 231, 11, 20], [386, 231, 10, 20], [190, 231, 14, 13], [190, 321, 14, 13], [70, 420, 11, 20], [386, 420, 10, 18], [289, 427, 13, 12], [86, 80, 14, 10], [184, 88, 14, 10], [367, 90, 13, 10], [84, 215, 14, 9], [366, 215, 14, 9], [191, 249, 14, 10], [194, 337, 14, 9], [87, 426, 12, 9], [288, 416, 13, 6], [368, 422, 12, 9]]} />
      <Boxes fill="#c00" at={[[73, 76, 5, 10], [190, 74, 14, 5], [388, 109, 5, 12], [73, 235, 5, 12], [388, 235, 5, 12], [194, 235, 6, 5], [194, 325, 6, 5], [73, 424, 5, 12], [388, 424, 5, 10], [293, 431, 5, 4]]} />
      <Boxes fill="#1ff01f" at={[[82, 100, 11, 8], [180, 107, 12, 9], [362, 109, 11, 9], [90, 233, 12, 9], [362, 234, 11, 9], [175, 233, 11, 8], [177, 319, 12, 9], [82, 443, 11, 9], [315, 423, 44, 10]]} />
      <Boxes fill="#4d7a1f" at={[[193, 116, 7, 8], [215, 93, 6, 9], [92, 259, 8, 8], [115, 236, 6, 8], [370, 258, 7, 8], [343, 236, 6, 9]]} />
      <TitleBlock x={95} y={500} />
    </g>
  );
}

function CentreLineSheet() {
  const cols = [79, 201, 300, 394];
  const rows = [94, 129, 256, 342, 444];
  return (
    <g transform="translate(800 240) scale(.33333)" strokeWidth="2">
      <rect x="23" y="34" width="433" height="545" stroke={K} strokeWidth="4.500" />
      <path d="M78 84h318v367H78z" stroke={K} strokeWidth="5" /><path d="M76 83h322" stroke={K} strokeWidth="8" />
      {cols.map((x) => <g key={x} stroke="#333"><path d={`M${x} 60v420`} strokeDasharray="14 4 5 4" strokeWidth="2.500" /><circle cx={x} cy="54" r="5.500" strokeWidth="3" /><circle cx={x} cy="484" r="5.500" strokeWidth="3" /></g>)}
      {rows.map((y) => <g key={y} stroke="#333"><path d={`M49 ${y}h376`} strokeDasharray="14 4 5 4" /><circle cx="43" cy={y} r="5.500" strokeWidth="3" /><circle cx="431" cy={y} r="5.500" strokeWidth="3" /></g>)}
      <path d="M75 68h324M75 469h324M61 84v370M414 84v370" stroke="#2026f5" strokeWidth="2.500" />
      <Boxes fill={R} at={[[129, 64, 24, 8], [242, 64, 20, 8], [340, 64, 15, 8], [80, 72, 12, 8], [375, 76, 12, 7], [228, 464, 18, 10], [55, 260, 12, 19], [409, 86, 11, 10], [409, 105, 10, 14], [408, 183, 11, 19], [409, 291, 10, 16], [409, 385, 10, 17], [408, 444, 12, 8], [205, 247, 11, 9], [232, 79, 8, 5]]} />
      <Boxes fill={K} at={[[74, 86, 12, 18], [191, 86, 20, 12], [387, 119, 11, 21], [74, 246, 12, 20], [387, 246, 11, 20], [195, 246, 12, 12], [195, 336, 13, 13], [74, 434, 12, 18], [387, 434, 11, 18], [294, 443, 12, 8]]} />
      <Boxes fill="#c00" at={[[78, 90, 5, 10], [195, 89, 13, 5], [390, 123, 4, 12], [78, 250, 4, 12], [390, 250, 4, 12], [78, 438, 4, 10], [390, 438, 4, 10], [297, 446, 5, 3]]} />
      <TitleBlock x={128} y={518} />
    </g>
  );
}

function LeftPlans() {
  const M = "#f0f";
  return (
    <>
      <g transform="translate(0 105) scale(.33333)" strokeWidth="3">
        <path d="M432 357h240V10" stroke="#2d2d2d" strokeWidth="11" />
        <path d="M514 10v158M432 87h85M432 166h190V10M522 128h98" stroke={M} strokeWidth="15" />
        <path d="M516 10v155M432 91h80M436 162h176M616 14v150M526 132h90" stroke="#999" strokeWidth="7" strokeDasharray="9 3" />
        <path d="M516 40v50M516 130v26M440 91h40M616 30v30M616 122v30M550 132h40" stroke={K} strokeWidth="9" />
        <path d="M432 34h80M432 117h180M474 94v70M586 80v54M640 10v166M540 72h80M432 136h80" stroke="#2b5cff" strokeWidth="2" />
        <path d="M532 71h78" stroke="#ff8a00" strokeWidth="6" /><path d="M524 50h20v45h-20z" fill={R} />
        <path d="M526 60l5 4M536 60l5 4M526 72l5 4M536 72l5 4M526 84l5 4M536 84l5 4" stroke="#fbb" strokeWidth="2" />
        <Boxes fill={R} at={[[442, 22, 22, 8], [582, 14, 8, 16], [438, 76, 8, 14], [441, 115, 22, 6], [470, 120, 8, 16], [556, 110, 12, 14], [450, 150, 12, 10], [580, 94, 8, 18], [578, 146, 8, 14], [504, 158, 14, 8], [572, 65, 18, 8], [612, 80, 8, 14]]} />
        <path d="M432 199h66v16h-66" stroke={K} strokeWidth="5" /><path d="M464 218h34v16h-34z" fill="#c9cbee" stroke="#777ad0" /><path d="M432 243h68" stroke="#555ae0" />
        <rect x="538" y="197" width="76" height="32" fill="#d8d8d8" stroke="#444" />
        <path d="M540 216l18-18M545 228l30-30M560 228l30-30M575 228l30-30M590 228l23-23" stroke="#333" />
        <path d="M572 229h14v5h-14z" fill={K} />
        <path d="M432 280h34v38h-34M432 347h34v-30M466 284h196M466 320h196M466 284v66M514 284v66M556 284v66" stroke="#333" />
        <Boxes fill="#222" at={[[476, 290, 34, 10], [480, 302, 28, 8], [518, 288, 8, 14], [530, 288, 14, 8], [518, 304, 28, 10], [594, 310, 64, 6], [558, 326, 100, 8], [560, 338, 100, 4], [560, 344, 74, 4], [434, 333, 16, 6]]} />
        <circle cx="488" cy="334" r="10" stroke="#444" strokeDasharray="3 2" /><circle cx="504" cy="334" r="9" stroke="#444" strokeDasharray="3 2" />
        <rect x="585" y="291" width="56" height="14" stroke={K} strokeWidth="5" />
      </g>
      <g transform="translate(0 290) scale(.33333)" strokeWidth="3">
        <path d="M432-127h211v688H432" stroke="#2d2d2d" strokeWidth="11" />
        <path d="M432-84h180v322h-94v34h-86M432 36h80M514-50v322M466-50v80M520 78h92M432-50h180" stroke={M} strokeWidth="15" />
        <path d="M432-78h175v310M514-45v310M432 270h80" stroke="#aaa" strokeWidth="7" strokeDasharray="8 4" />
        <path d="M432-45h172M436 36h70M514-45v100M514 190v36M608-60v40M608 20v40M520 78h84M545 237h50M468-50v76M496-78h30" stroke={K} strokeWidth="9" />
        <path d="M524-40v300h66V-40M524 88h66M524 262h66M440 256h66V50M440-70h150M518 281h96" stroke="#62e562" strokeDasharray="16 7" />
        <path d="M432-136h182M620-128v408M432 50h78M432 252h80M492 50v222M520 96h84M600-40v240M440-68h100M518-30h80M450-30v60" stroke="#2b5cff" strokeWidth="2" />
        <Boxes fill={K} at={[[550, 31, 34, 14], [444, 110, 28, 15], [552, 174, 18, 8], [544, 180, 34, 8], [448, 214, 18, 8], [448, 221, 34, 8], [554, 322, 16, 42], [430, 8, 24, 14], [474, -36, 28, 14]]} />
        <path d="M562 344h8" stroke="#fff" strokeWidth="3" />
        <path d="M604 244v208h8V244M432 443h64v8h-64" stroke={K} strokeWidth="3" /><Boxes fill={R} at={[[604, 264, 8, 14]]} />
        <path d="M432 500h204M432 528h204M474 500v52M544 500v52M432 552h204" stroke="#777" />
        <rect x="548" y="502" width="80" height="18" stroke={K} strokeWidth="5" /><path d="M562 511h48" stroke={K} />
        <Boxes fill="#222" at={[[430, 510, 12, 18], [478, 504, 28, 10], [478, 518, 30, 10], [512, 504, 10, 8], [528, 502, 12, 8], [516, 516, 22, 10], [430, 536, 28, 10], [566, 522, 56, 6], [550, 534, 84, 6], [550, 542, 76, 5]]} />
        <circle cx="486" cy="541" r="9" stroke="#333" strokeDasharray="3 2" /><circle cx="500" cy="541" r="9" stroke="#333" strokeDasharray="3 2" />
        <path d="M463 556v86M473 652h88" stroke="#444" strokeWidth="2.500" /><rect x="455" y="643" width="17" height="16" stroke="#444" strokeWidth="2.500" />
        <path d="M567 626l24 23M591 626l-24 23" stroke="#777" strokeWidth="2.500" />
      </g>
    </>
  );
}

function Drawing() {
  return (
    <svg viewBox="143 110 857 408" preserveAspectRatio="xMinYMin slice" fill="none" className="absolute inset-0 h-full w-full" role="img" aria-label="Building plan sheets">
      <LeftPlans />
      <path d="M143 210.500h166" stroke="#222" />
      <path d="M412.500 109l23.500 35 54-35M666.500 109l31.500 36 78-36" stroke={R} strokeWidth="1.300" />
      <path d="M241 181.300h748v301H241z" stroke="#111" strokeWidth="1.600" />
      <path d="M996 110v408" stroke="#111" strokeWidth="1.600" />
      <SteelSheet />
      <WaterTankSheet />
      <FootingSheet />
      <CentreLineSheet />
      <g fontFamily="Liberation Sans" fontWeight="700" fontSize="10" fill="#111">
        <text x="347" y="453">STEEL</text><text x="347" y="465">PLAN</text>
        <text x="505" y="447">WATER TANK</text><text x="532" y="459">PLAN</text>
        <text x="709" y="451">FOOTING</text><text x="709" y="463">PLAN</text>
        <text x="863" y="443">CENTRE LINE</text><text x="880" y="455">PLAN</text>
        <text x="143" y="488">P C</text><text x="143" y="500">AN</text>
      </g>
    </svg>
  );
}

function ViewCube() {
  const dir = "absolute flex h-[12px] w-[12px] items-center justify-center font-[Liberation_Sans] text-[12px] font-bold text-[#cfcfcf]";
  return (
    <div className="absolute right-[8px] top-[23px] h-[104px] w-[76px]">
      <span className="absolute left-[3px] top-[4px]"><Svg w={72} h={72}><circle cx="35" cy="35" r="32" stroke="#fafafa" strokeWidth="5" /></Svg></span>
      <span className={`${dir} left-[32px] top-[2px]`}>N</span>
      <span className={`${dir} left-0 top-[34px]`}>W</span>
      <span className={`${dir} left-[64px] top-[34px]`}>E</span>
      <span className={`${dir} left-[32px] top-[66px]`}>S</span>
      <button className="absolute left-[23px] top-[25px] flex h-[29px] w-[30px] items-center justify-center border border-[#a9a9a9] bg-[#e9e9ea]">
        <span className="bg-[#dcdde2] px-[2px] py-[4px] font-bold leading-[9px] text-[#8a8c90]">TOP</span>
      </button>
      <button className="absolute left-[23px] top-[89px] flex h-[10px] w-[30px] items-center justify-center gap-[3px] rounded-[3px] bg-[#e6e8f0] font-bold text-[#b3b5bd]">WCS<Svg w={6} h={4}><path d="M.5 .5h5L3 3.500z" stroke="#b3b5bd" strokeWidth=".7" /></Svg></button>
    </div>
  );
}

function Canvas() {
  return (
    <section aria-label="Drawing area" className="relative min-h-[408px] flex-1 overflow-hidden bg-white">
      <Drawing />
      <span className="absolute left-[2px] top-[3px] whitespace-nowrap text-[8px] leading-[11px] text-[#333]">[−][Top][2D Wireframe]</span>
      <div className="absolute right-[4px] top-[5px] flex gap-[4px]">
        <Svg w={9} h={9}><rect x=".5" y="4" width="8" height="3" rx="1" stroke="#888" /></Svg>
        <Svg w={9} h={9}><path d="M2.500 2.500v-2h6v6h-2M.5 2.500h6v6h-6z" stroke="#666" /><path d="M2 5h3v2H2z" fill="#777" /></Svg>
        <Svg w={9} h={9}><path d="M1.500 1.500l5.500 6M7 1.500l-5.500 6" stroke="#555" strokeWidth="2.500" /><path d="M1.500 1.500l5.500 6M7 1.500l-5.500 6" stroke="#fff" /></Svg>
      </div>
      <ViewCube />
      <div className="absolute -right-px top-[139px] flex w-[23px] flex-col items-center justify-around rounded-[3px] border border-[#cfcfcf] bg-[#f4f4f4]/70 py-[4px]">
        <Svg w={18} h={126}><g stroke="#d3d3d3"><circle cx="9" cy="14" r="6.500" /><circle cx="9" cy="14" r="3" /><path d="M1 31h16M1 104h16M5 45V39M7.500 44v-8M10 44v-8M12.500 45v-6M4 44q1 7 6 7 5-1 5-8M3 56l12 12M15 56L3 68M4 68h3M9 78v18M2 87h14M5 83l-3 4 3 4M13 83l3 4-3 4M2 108h13v13H2zM8 108v13" /></g><path d="M7 112l4 2.500-4 2.500z" fill="#c9c9c9" /></Svg>
      </div>
      <div className="absolute bottom-0 left-[199px] right-[196px] flex h-[18px] border border-[#777d86] bg-white">
        <div className="flex w-[36px] shrink-0 items-center gap-[4px] bg-[#2d3340] pl-[2px]">
          <Svg w={4} h={13}><path d="M.5 .5v12M3 .5v12" stroke="#c5cad1" strokeDasharray="1 1" /></Svg>
          <Svg w={7} h={7}><path d="M1 1l5 5M6 1L1 6" stroke="#fff" strokeWidth="1.300" /></Svg>
          <span className="pl-[3px]"><Svg w={11} h={11}><path d="M1.500 9.500l5-5" stroke="#fff" strokeWidth="2" /><path d="M6 1.500Q8 0 9.500 .8L7.500 2.500 8.500 4l2-1.500Q10.800 5 9 6 7 6.500 6 5.500 5 4 6 1.500z" fill="#fff" /></Svg></span>
        </div>
        <div className="flex flex-1 items-center gap-[2px] pl-[2px] pr-[3px]">
          <Svg w={11} h={9}><path d="M.5 .5h10v8H.5z" fill="#eee" stroke="#8b8b8b" /><path d="M1 1.500h9" stroke="#8b8b8b" /><path d="M2 4l1.500 1L2 6M4.500 6.500h2" stroke="#555" strokeWidth=".7" /></Svg>
          <Svg w={5} h={3}><path d="M0 0h5L2.500 3z" fill="#555" /></Svg>
          <input aria-label="Command line" defaultValue="QSAVE" className="min-w-0 flex-1 bg-transparent text-[8px] leading-[12px] text-[#222] outline-none" />
          <Svg w={5} h={3}><path d="M0 3h5L2.500 0z" fill="#444" /></Svg>
        </div>
      </div>
    </section>
  );
}

/* ---------- status bar ---------- */
const person = "M6 1l1.300 3L10 9.500 8.500 10 6.800 7.500H5.200L3.500 10 2 9.500 4.700 4z";
const on = "bg-[#5b8fcb]";
const off = "bg-[#2f3744]";
const status: { k: string; w: string; bg: string; d: React.ReactNode }[] = [
  { k: "Grid", w: "w-[17px]", bg: off, d: <path d="M3 1v10M6 1v10M9 1v10M1 3h10M1 6h10M1 9h10" stroke={W} strokeWidth=".8" /> },
  { k: "Snap", w: "w-[15px]", bg: off, d: <path d="M2 2.500h9M2 6h9M2 9.500h9" stroke={W} strokeWidth="1.300" strokeDasharray="1.300 2" /> },
  { k: "v1", w: "w-[12px]", bg: off, d: null },
  { k: "Ortho", w: "w-[15px]", bg: on, d: <path d="M1.500 1v9.500H11M1.500 7.500h3v3" stroke="#fff" /> },
  { k: "Polar", w: "w-[17px]", bg: off, d: <><circle cx="5.500" cy="6.500" r="4" stroke={W} /><path d="M5.500 6.500H12M5.500 6.500L10 2" stroke={W} strokeWidth=".8" /></> },
  { k: "v2", w: "w-[10px]", bg: off, d: null },
  { k: "Isodraft", w: "w-[16px]", bg: off, d: <><path d="M6 5v6" stroke="#d05a5a" /><path d="M2 2l8 8" stroke="#4fae6d" /><path d="M6 1v4" stroke={W} /></> },
  { k: "v3", w: "w-[11px]", bg: off, d: null },
  { k: "Tracking", w: "w-[15px]", bg: on, d: <path d="M10.500 1.500L1.500 10.500H11" stroke="#fff" /> },
  { k: "Osnap", w: "w-[15px]", bg: on, d: <><path d="M2 3h8v8H2z" stroke="#e8eef5" /><path d="M.5 1.500h3v3h-3z" fill="#fff" /></> },
  { k: "v4", w: "w-[11px]", bg: off, d: null },
  { k: "Lineweight", w: "mr-[3px] w-[16px]", bg: on, d: <><path d="M1 2.500h6M1 9.500h6" stroke="#fff" strokeWidth="1.200" /><path d="M1 6h10" stroke="#fff" strokeWidth="2.500" /><path d="M7 2.500h5M7 9.500h5" stroke="#fff" strokeWidth="1.200" /></> },
  { k: "Annotation visibility", w: "w-[15px]", bg: on, d: <><path d={person} fill="#fff" /><circle cx="9.500" cy="2.500" r="1.700" stroke="#fff" /></> },
  { k: "Auto scale", w: "w-[16px]", bg: off, d: <><path d={person} fill={W} /><path d="M10 .5L8.500 3H10L9 5" stroke={W} /></> },
  { k: "Annotation scale", w: "w-[15px]", bg: off, d: <path d={person} fill={W} /> },
];

function StatusBar() {
  return (
    <footer className="flex h-[19px] items-start justify-between bg-[#222933]">
      <div className="flex h-[12px] pl-[5px] text-[#b9bfc8]">
        <button className="w-[37px] bg-[#3b4453] font-bold text-white [clip-path:polygon(0_0,100%_0,calc(100%-4px)_100%,4px_100%)]">Model</button>
        <button className="w-[42px] bg-[#2f3744] [clip-path:polygon(0_0,100%_0,calc(100%-4px)_100%,4px_100%)]">Layout1</button>
        <button aria-label="New layout" className="ml-1 flex w-[15px] items-center justify-center rounded-b bg-[#2f3744]"><Svg w={5} h={5}><path d="M2.500 0v5M0 2.500h5" stroke={W} /></Svg></button>
      </div>
      <div className="flex h-[17px] items-stretch text-[#e6e9ed]">
        <button className="mr-[2px] w-[30px] bg-[#3b4453]">MODEL</button>
        {status.map((s) => (
          <button key={s.k} aria-label={s.k} className={`flex items-center justify-center border-r border-[#262d38] ${s.w} ${s.bg}`}>
            {s.d ? <Svg w={12} h={12}>{s.d}</Svg> : <Caret big />}
          </button>
        ))}
        <button className="flex w-[22px] items-center justify-center gap-[2px] bg-[#2f3744]">1:1<Caret big /></button>
        <button aria-label="Workspace" className="flex w-[28px] items-center justify-center gap-[4px] bg-[#2f3744]">
          <Svg w={12} h={12}><circle cx="6" cy="6" r="3.200" stroke={W} strokeWidth="2" /><path d="M6 .5v2M6 9.500v2M.5 6h2M9.500 6h2M2 2l1.500 1.500M8.500 8.500L10 10M10 2L8.500 3.500M3.500 8.500L2 10" stroke={W} strokeWidth="1.800" /></Svg><Caret big />
        </button>
        <button aria-label="Monitor" className="flex w-[16px] items-center justify-center bg-[#2f3744]"><Svg w={11} h={11}><path d="M5.500 .5v10M.5 5.500h10" stroke={W} strokeWidth="1.300" /></Svg></button>
        <button aria-label="Isolate" className="mr-[2px] flex w-[18px] items-center justify-center bg-[#2f3744]"><Svg w={12} h={12}><path d="M1 1h4v4H1zM4 7.500L6.500 11h-5z" stroke={G} /><circle cx="9.500" cy="6" r="1.900" stroke={G} /></Svg></button>
        <button aria-label="Plot" className="flex w-[17px] items-center justify-center bg-[#2f3744]"><Svg w={13} h={12}><path d="M3 1h7v3H3z" fill={W} /><path d="M1 4h11v5H1z" fill="#8d939c" /><path d="M3 7h7v4H3z" fill="#efb7a8" /></Svg></button>
        <button aria-label="Graphics" className="flex w-[16px] items-center justify-center bg-[#2f3744]"><Svg w={13} h={12}><path d="M1 1h6v6H1z" fill="#e8c44a" /><path d="M3 2h8v5H3z" fill="#3f93db" /><path d="M4 8l3 3 5-6" stroke="#3fbf5a" strokeWidth="2" /></Svg></button>
        <button aria-label="Trace" className="mr-[3px] flex w-[17px] items-center justify-center bg-[#2f3744]"><Svg w={12} h={12}><path d="M1 1h10v9H1z" fill="#e6e6e6" /><path d="M2 8l3-4 2 2 3-4" stroke="#555" /><path d="M8 7l3 4H6z" fill={Y} /></Svg></button>
        <button aria-label="Clean screen" className="flex w-[17px] items-center justify-center bg-[#2f3744]"><Svg w={11} h={9}><path d="M.5 .5h10v8H.5z" stroke={W} /><path d="M2.500 4.500v2h2M6.500 2.500h2v2" stroke={W} /></Svg></button>
        <button aria-label="Customize" className="flex w-[14px] items-center justify-center bg-[#2f3744]"><Svg w={10} h={10}><path d="M0 1.500h10M0 5h10M0 8.500h10" stroke={W} strokeWidth="1.300" /></Svg></button>
      </div>
    </footer>
  );
}

export default function App() {
  return (
    <div className="flex min-h-screen flex-col bg-[#222933] font-[Roboto,sans-serif] text-[8px] leading-[10px] text-[#dfe3e8] [text-rendering:geometricPrecision]">
      <div className="border-t border-[#4b525d]"><Header /></div>
      <Ribbon />
      <FileTabs />
      <main className="flex flex-1">
        <Palette />
        <Canvas />
      </main>
      <StatusBar />
    </div>
  );
}
